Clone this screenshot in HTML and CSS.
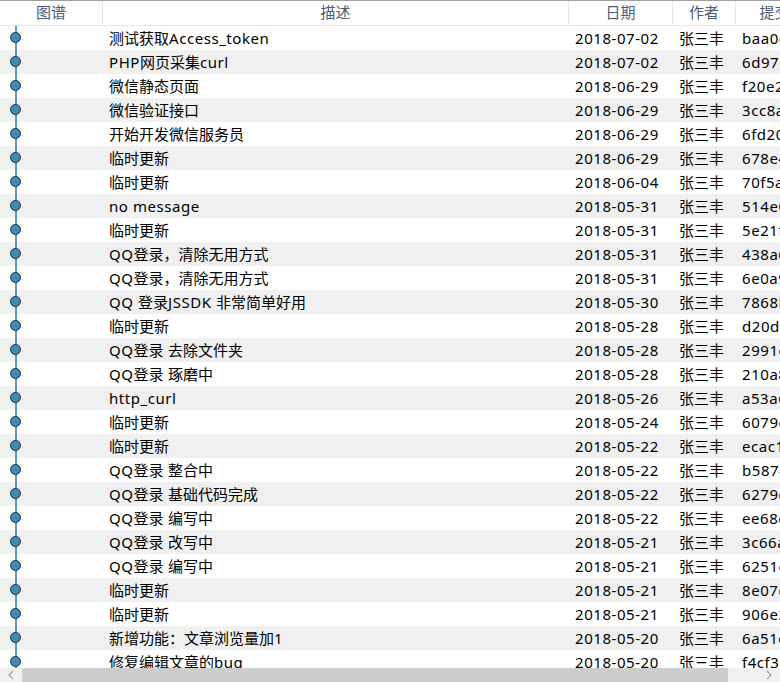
FILE: index.html
```html
<!DOCTYPE html>
<html lang="zh-CN">
<head>
<meta charset="UTF-8">
<title>提交历史</title>
<link rel="stylesheet" href="styles.css">
</head>
<body>

<div class="historico">
  <div class="cabecalho">
    <div class="col col-grafo">图谱</div>
    <div class="col col-desc">描述</div>
    <div class="col col-data">日期</div>
    <div class="col col-autor">作者</div>
    <div class="col col-hash">提交</div>
  </div>

  <div class="linhas" id="linhas"></div>

  <div class="rolagem">
    <div class="seta">
      <svg width="8" height="10" viewBox="0 0 8 10"><path d="M6 1 L2 5 L6 9" fill="none" stroke="#a3a3a3" stroke-width="1.3"/></svg>
    </div>
    <div class="trilho"><div class="polegar"></div></div>
    <div class="seta">
      <svg width="8" height="10" viewBox="0 0 8 10"><path d="M2 1 L6 5 L2 9" fill="none" stroke="#a3a3a3" stroke-width="1.3"/></svg>
    </div>
  </div>
</div>

<script>
const commits = [
  ['测试获取Access_token', '2018-07-02', 'baa0c41'],
  ['PHP网页采集curl', '2018-07-02', '6d97e1a'],
  ['微信静态页面', '2018-06-29', 'f20e2b9'],
  ['微信验证接口', '2018-06-29', '3cc8a07'],
  ['开始开发微信服务员', '2018-06-29', '6fd20c3'],
  ['临时更新', '2018-06-29', '678e4d1'],
  ['临时更新', '2018-06-04', '70f5a92'],
  ['no message', '2018-05-31', '514e0b8'],
  ['临时更新', '2018-05-31', '5e21f7c'],
  ['QQ登录，清除无用方式', '2018-05-31', '438a6e2'],
  ['QQ登录，清除无用方式', '2018-05-31', '6e0a93d'],
  ['QQ 登录JSSDK 非常简单好用', '2018-05-30', '7868b10'],
  ['临时更新', '2018-05-28', 'd20d5a4'],
  ['QQ登录 去除文件夹', '2018-05-28', '2991c7e'],
  ['QQ登录 琢磨中', '2018-05-28', '210a8f3'],
  ['http_curl', '2018-05-26', 'a53a6d0'],
  ['临时更新', '2018-05-24', '6079e25'],
  ['临时更新', '2018-05-22', 'ecac1b9'],
  ['QQ登录 整合中', '2018-05-22', 'b5874fa'],
  ['QQ登录 基础代码完成', '2018-05-22', '6279d03'],
  ['QQ登录 编写中', '2018-05-22', 'ee68c15'],
  ['QQ登录 改写中', '2018-05-21', '3c66a48'],
  ['QQ登录 编写中', '2018-05-21', '6251e9b'],
  ['临时更新', '2018-05-21', '8e07d36'],
  ['临时更新', '2018-05-21', '906e2f1'],
  ['新增功能：文章浏览量加1', '2018-05-20', '6a51c8e'],
  ['修复编辑文章的bug', '2018-05-20', 'f4cf3a7']
];

// trechos latinos ganham um pouco de espaçamento
function latino(texto) {
  return texto.replace(/[A-Za-z0-9_ ]+/g, m => `<span class="lat">${m}</span>`);
}

let html = '';
for (let c of commits) {
  html += `<div class="linha">
    <div class="col col-grafo"><span class="no"></span></div>
    <div class="col col-desc">${latino(c[0])}</div>
    <div class="col col-data lat">${c[1]}</div>
    <div class="col col-autor">张三丰</div>
    <div class="col col-hash lat">${c[2]}</div>
  </div>`;
}
document.getElementById('linhas').innerHTML = html;
</script>

</body>
</html>
```

FILE: styles.css
```css
body {
  margin: 0;
  padding: 0;
  background-color: #fff;
  font-family: "Noto Sans", "Noto Sans CJK SC", sans-serif;
  font-size: 15px;
  color: #000;
  overflow: hidden;
}

.historico {
  width: 780px;
  height: 682px;
  display: flex;
  flex-direction: column;
  overflow: hidden;
  border-top: 1px solid #a0a0a0;
  box-sizing: border-box;
}

.cabecalho {
  display: flex;
  height: 25px;
  flex-shrink: 0;
  box-sizing: border-box;
  border-bottom: 1px solid #e5e5e5;
  color: #4c5b78;
}
.cabecalho .col {
  text-align: center;
  line-height: 23px;
  border-right: 1px solid #e5e5e5;
  box-sizing: border-box;
}

.col {
  flex-shrink: 0;
  white-space: nowrap;
  overflow: hidden;
}
.col-grafo { width: 103px; }
.col-desc { width: 466px; }
.col-data { width: 104px; }
.col-autor { width: 63px; }
.col-hash { width: 78px; }

.lat {
  letter-spacing: 0.55px;
}

.linhas {
  flex: 1;
  overflow: hidden;
}

.linha {
  display: flex;
  height: 24px;
  line-height: 24px;
}
.linha:nth-child(even) {
  background-color: #f0f0f0;
}
.linha .col-desc,
.linha .col-data,
.linha .col-autor,
.linha .col-hash {
  padding-left: 6px;
  box-sizing: border-box;
}

/* linha do grafo e o ponto de cada commit */
.linha .col-grafo {
  position: relative;
}
.linha .col-grafo::before {
  content: "";
  position: absolute;
  left: 15px;
  top: 0;
  bottom: 0;
  width: 2px;
  background-color: #5b98bd;
}
.no {
  position: absolute;
  left: 10px;
  top: 6px;
  width: 9px;
  height: 9px;
  border-radius: 50%;
  background-color: #4089b4;
  border: 1.5px solid #1d3646;
}

.rolagem {
  height: 14px;
  flex-shrink: 0;
  display: flex;
  background-color: #f0f0f0;
}
.seta {
  width: 22px;
  display: flex;
  align-items: center;
  justify-content: center;
}
.trilho {
  flex: 1;
  padding-right: 30px;
}
.polegar {
  height: 100%;
  background-color: #cdcdcd;
}
```
